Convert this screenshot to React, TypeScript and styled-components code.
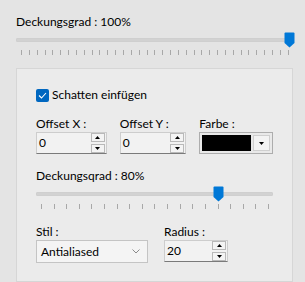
import React from 'react';
import styled, { createGlobalStyle } from 'styled-components';

const GlobalStyle = createGlobalStyle`
  html, body {
    margin: 0;
    padding: 0;
    background: #e4e4e4;
  }
  body {
    font-family: Lato, "Noto Sans", sans-serif;
    font-size: 12px;
    color: #000000;
  }
`;

const Page = styled.div`
  width: 305px;
  height: 282px;
  box-sizing: border-box;
  padding: 14px 12px 0 16px;
  display: flex;
  flex-direction: column;
  overflow: hidden;
`;

const Label = styled.div<{ $mt?: number }>`
  height: 16px;
  line-height: 16px;
  white-space: nowrap;
  margin-top: ${p => p.$mt ?? 0}px;
`;

const SliderWrap = styled.div`
  position: relative;
  height: 26px;
  display: flex;
  flex-direction: column;
`;

const Track = styled.div`
  margin-top: 8px;
  height: 2px;
  background: #d2d2d2;
  border: 1px solid #cfcfcf;
  border-radius: 1px;
  box-sizing: content-box;
`;

const Ticks = styled.div`
  margin-top: 8px;
  height: 5px;
  padding: 0 4px 0 5px;
  display: flex;
  justify-content: space-between;
`;

const Tick = styled.span`
  width: 1px;
  height: 5px;
  background: #a8a8a8;
`;

const Thumb = styled.svg`
  position: absolute;
  top: 2px;
  width: 11px;
  height: 16px;
  margin-left: -5px;
`;

function Slider({ pos, ticks }: { pos: number; ticks: number }) {
  return (
    <SliderWrap>
      <Track />
      <Ticks>
        {Array.from({ length: ticks }).map((_, i) => (
          <Tick key={i} />
        ))}
      </Ticks>
      <Thumb viewBox="0 0 11 16" style={{ left: `calc(5px + (100% - 9px) * ${pos})` }}>
        <path d="M1.5 0.5 H9.5 Q10.5 0.5 10.5 1.5 V11 L5.5 15.5 L0.5 11 V1.5 Q0.5 0.5 1.5 0.5 Z" fill="#0078d7" />
      </Thumb>
    </SliderWrap>
  );
}

const Panel = styled.div`
  margin-top: 12px;
  height: 214px;
  box-sizing: border-box;
  flex-shrink: 0;
  background: #ebebeb;
  border: 1px solid #d6d6d6;
  padding: 18px 19px 0 19px;
  display: flex;
  flex-direction: column;
`;

const CheckRow = styled.label`
  display: flex;
  align-items: center;
  gap: 3px;
  height: 16px;
  line-height: 16px;
`;

const CheckBox = styled.span`
  width: 13px;
  height: 13px;
  border-radius: 2px;
  background: #0067c0;
  display: flex;
  align-items: center;
  justify-content: center;
`;

const FieldRow = styled.div<{ $gap: number; $mt: number }>`
  display: flex;
  gap: ${p => p.$gap}px;
  margin-top: ${p => p.$mt}px;
`;

const Field = styled.div<{ $w: number }>`
  width: ${p => p.$w}px;
  display: flex;
  flex-direction: column;
`;

const TextBox = styled.div`
  height: 22px;
  box-sizing: border-box;
  border: 1px solid #cdcdcd;
  border-bottom: 1px solid #7a7a7a;
  background: #f2f2f2;
  display: flex;
  align-items: center;
  padding: 0 1px 0 2px;
`;

const Value = styled.span`
  flex: 1;
  line-height: 16px;
`;

const Spin = styled.div`
  display: flex;
  flex-direction: column;
  gap: 2px;
`;

const SpinBtn = styled.div`
  width: 12px;
  height: 7px;
  border: 1px solid #b9b9b9;
  background: #f4f4f4;
  display: flex;
  align-items: center;
  justify-content: center;
`;

const Tri = styled.svg`
  width: 5px;
  height: 3px;
`;

function SpinBox({ value }: { value: string }) {
  return (
    <TextBox>
      <Value>{value}</Value>
      <Spin>
        <SpinBtn>
          <Tri viewBox="0 0 5 3"><path d="M0 3 L2.5 0 L5 3 Z" fill="#000" /></Tri>
        </SpinBtn>
        <SpinBtn>
          <Tri viewBox="0 0 5 3"><path d="M0 0 L5 0 L2.5 3 Z" fill="#000" /></Tri>
        </SpinBtn>
      </Spin>
    </TextBox>
  );
}

const ColorBox = styled.div`
  height: 22px;
  box-sizing: border-box;
  border: 1px solid #adadad;
  background: #e9e9e9;
  display: flex;
  align-items: stretch;
  padding: 2px;
  gap: 2px;
`;

const Swatch = styled.div`
  flex: 1;
  background: #000000;
`;

const DropBtn = styled.div`
  width: 15px;
  border: 1px solid #cfcfcf;
  background: #f3f3f3;
  display: flex;
  align-items: center;
  justify-content: center;
`;

const Select = styled.div`
  height: 23px;
  box-sizing: border-box;
  border: 1px solid #c4c4c4;
  background: #f4f4f4;
  display: flex;
  align-items: center;
  padding: 0 7px 0 4px;
`;

const Chevron = styled.svg`
  width: 8px;
  height: 5px;
`;

export default function App() {
  return (
    <>
      <GlobalStyle />
      <Page>
        <Label>Deckungsgrad : 100%</Label>
        <Slider pos={1} ticks={35} />
        <Panel>
          <CheckRow>
            <CheckBox>
              <svg width="9" height="7" viewBox="0 0 9 7">
                <path d="M1 3.5 L3.5 6 L8 1" fill="none" stroke="#ffffff" strokeWidth="1.1" />
              </svg>
            </CheckBox>
            Schatten einfügen
          </CheckRow>
          <FieldRow $gap={13} $mt={13}>
            <Field $w={71}>
              <Label>Offset X :</Label>
              <SpinBox value="0" />
            </Field>
            <Field $w={67}>
              <Label>Offset Y :</Label>
              <SpinBox value="0" />
            </Field>
            <Field $w={74}>
              <Label>Farbe :</Label>
              <ColorBox>
                <Swatch />
                <DropBtn>
                  <Tri viewBox="0 0 5 3"><path d="M0 0 L5 0 L2.5 3 Z" fill="#000" /></Tri>
                </DropBtn>
              </ColorBox>
            </Field>
          </FieldRow>
          <Label $mt={14}>Deckungsqrad : 80%</Label>
          <Slider pos={0.775} ticks={19} />
          <FieldRow $gap={16} $mt={14}>
            <Field $w={112}>
              <Label>Stil :</Label>
              <Select>
                <Value>Antialiased</Value>
                <Chevron viewBox="0 0 8 5">
                  <path d="M0.5 0.5 L4 4 L7.5 0.5" fill="none" stroke="#8a8a8a" strokeWidth="1" />
                </Chevron>
              </Select>
            </Field>
            <Field $w={64}>
              <Label>Radius :</Label>
              <SpinBox value="20" />
            </Field>
          </FieldRow>
        </Panel>
      </Page>
    </>
  );
}
